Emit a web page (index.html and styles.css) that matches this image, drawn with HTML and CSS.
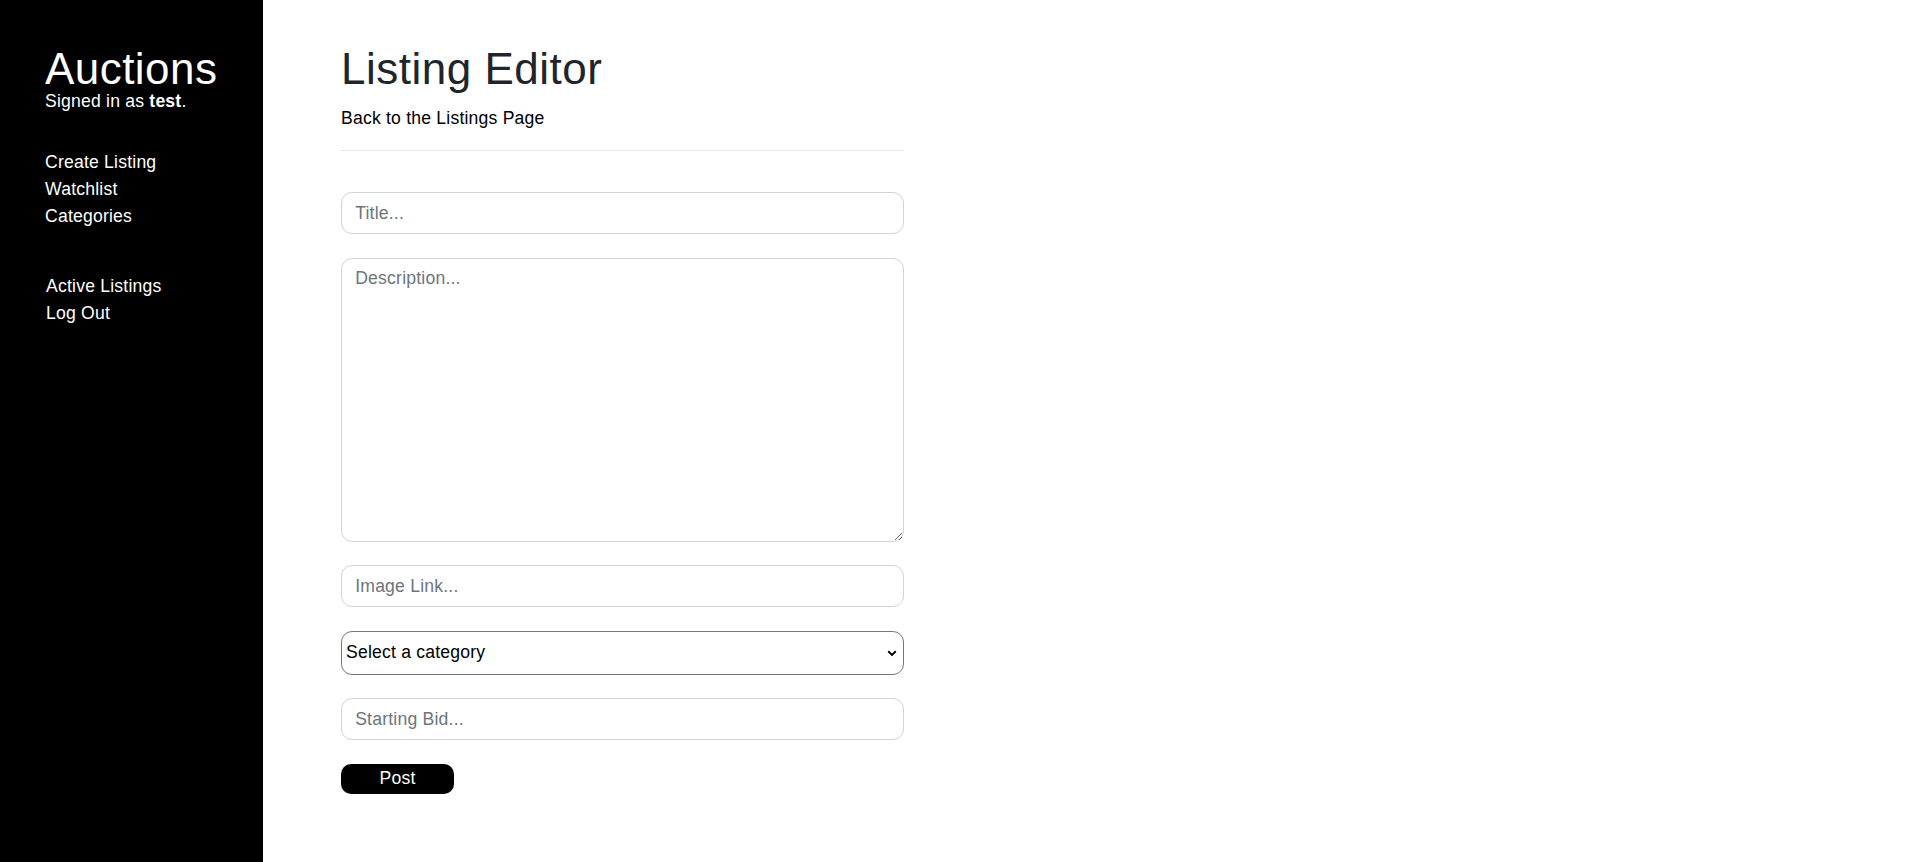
FILE: index.html
```html
<!DOCTYPE html>
<html lang="en">
<head>
<meta charset="utf-8">
<title>Listing Editor</title>
<link rel="stylesheet" href="styles.css">
</head>
<body>
  <aside class="sidebar">
    <h1 class="brand">Auctions</h1>
    <div class="signed">Signed in as <strong>test</strong>.</div>
    <ul class="nav">
      <li><a href="#">Create Listing</a></li>
      <li><a href="#">Watchlist</a></li>
      <li><a href="#">Categories</a></li>
    </ul>
    <ul class="nav nav-secondary">
      <li><a href="#">Active Listings</a></li>
      <li><a href="#">Log Out</a></li>
    </ul>
  </aside>
  <main class="main">
    <div class="editor">
      <h1 class="title">Listing Editor</h1>
      <a class="back" href="#">Back to the Listings Page</a>
      <hr class="rule">
      <form class="form">
        <input class="field" type="text" placeholder="Title...">
        <textarea class="field textarea" placeholder="Description..."></textarea>
        <input class="field" type="text" placeholder="Image Link...">
        <div class="select-wrap">
          <select class="select">
            <option>Select a category</option>
          </select>
          <svg class="chevron" width="10" height="7" viewBox="0 0 10 7" aria-hidden="true"><path d="M1.2 1.3 L5 5 L8.8 1.3" fill="none" stroke="#000" stroke-width="1.9"/></svg>
        </div>
        <input class="field" type="text" placeholder="Starting Bid...">
        <button class="post" type="button">Post</button>
      </form>
    </div>
  </main>
</body>
</html>
```

FILE: styles.css
```css
* { box-sizing: border-box; }
html, body { margin: 0; }
body {
  font-family: "Liberation Sans", Arial, sans-serif;
  font-size: 17.6px;
  line-height: 1.5;
  letter-spacing: 0.2px;
  color: #212529;
  background: #fff;
  display: flex;
  min-height: 862px;
}
.sidebar {
  width: 263px;
  flex: none;
  min-height: 862px;
  background: #000;
  color: #fff;
  padding: 47px 0 0 45px;
}
.brand {
  font-size: 44px;
  line-height: 44px;
  font-weight: 400;
  letter-spacing: 0.45px;
  margin: 0;
}
.signed { line-height: 20px; }
.signed strong { font-weight: 700; }
.nav {
  list-style: none;
  margin: 37.5px 0 0;
  padding: 0;
}
.nav li { line-height: 27px; }
.nav a { color: #fff; text-decoration: none; }
.nav-secondary { margin-top: 43px; padding-left: 1px; }

.main { flex: 1; padding: 47px 0 0 78px; }
.editor { width: 563px; }
.title {
  font-size: 44px;
  line-height: 44px;
  font-weight: 400;
  letter-spacing: 0.5px;
  margin: 0;
  color: #212529;
}
.back {
  display: block;
  margin-top: 14px;
  line-height: 26.4px;
  color: #000;
  text-decoration: none;
}
.rule {
  border: 0;
  border-top: 1px solid #e6e6e6;
  margin: 18.6px 0 0;
}
.form {
  margin-top: 41px;
  display: flex;
  flex-direction: column;
  align-items: flex-start;
  gap: 23.5px;
}
.field {
  width: 100%;
  height: 42px;
  border: 1px solid #ced4da;
  border-radius: 11px;
  padding: 6px 13.2px;
  font: inherit;
  letter-spacing: 0.2px;
  line-height: 26.4px;
  color: #495057;
  background: #fff;
  outline: none;
}
.field::placeholder { color: #6c757d; opacity: 1; }
.textarea { height: 284px; resize: vertical; display: block; }
.select-wrap { position: relative; width: 100%; }
.select {
  display: block;
  width: 100%;
  height: 44px;
  border: 1px solid #767676;
  border-radius: 11px;
  padding: 0 4px;
  font: inherit;
  letter-spacing: 0.2px;
  color: #000;
  background: #fff;
  -webkit-appearance: none;
  appearance: none;
  outline: none;
}
.chevron {
  position: absolute;
  right: 7px;
  top: 19px;
  pointer-events: none;
}
.post {
  width: 113px;
  height: 30px;
  border: 0;
  border-radius: 10px;
  background: #000;
  color: #fff;
  font: inherit;
  letter-spacing: 0.2px;
  line-height: 29px;
  padding: 0;
}
```
